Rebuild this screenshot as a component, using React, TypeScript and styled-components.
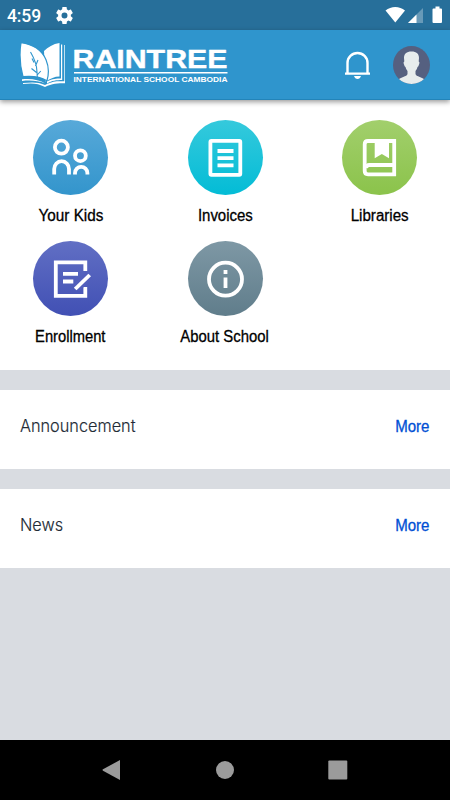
import React from 'react';
import styled, { createGlobalStyle } from 'styled-components';

const GlobalStyle = createGlobalStyle`
  * { box-sizing: border-box; }
  body { margin: 0; background: #d9dce1; font-family: "Liberation Sans", Arial, sans-serif; }
`;

const Screen = styled.div`
  width: 450px;
  height: 800px;
  display: flex;
  flex-direction: column;
  background: #d9dce1;
  overflow: hidden;
`;

const StatusBar = styled.div`
  height: 30px;
  flex: none;
  display: flex;
  align-items: center;
  justify-content: space-between;
  padding: 0 7px;
  background: #276f9a;
  color: #fff;
`;

const StatusGroup = styled.div`
  display: flex;
  align-items: center;
`;

const Clock = styled.span`
  width: 49px;
  padding-top: 1px;
  font: 500 17.5px/30px Roboto, sans-serif;
  letter-spacing: -0.1px;
`;

const Header = styled.header`
  height: 70px;
  flex: none;
  display: flex;
  align-items: center;
  justify-content: space-between;
  padding: 0 20px;
  background: #2f95cd;
  border-bottom: 1px solid #2384b9;
  box-shadow: 0 2px 5px rgba(0, 0, 0, 0.4);
  z-index: 1;
`;

const HeaderActions = styled.div`
  display: flex;
  align-items: center;
  gap: 22px;
`;

const Menu = styled.nav`
  height: 270px;
  flex: none;
  display: grid;
  grid-template-columns: repeat(3, 75px);
  grid-auto-rows: 121px;
  justify-content: space-between;
  padding: 20px 33px 0;
  background: #fff;
`;

const MenuItem = styled.div`
  display: flex;
  flex-direction: column;
  align-items: center;
`;

const Disc = styled.div<{ $from: string; $to: string }>`
  width: 75px;
  height: 75px;
  flex: none;
  border-radius: 50%;
  background: linear-gradient(${p => p.$from}, ${p => p.$to});
`;

const MenuLabel = styled.span<{ $scale: number }>`
  margin-top: 10.5px;
  font-size: 16px;
  line-height: 20px;
  white-space: nowrap;
  transform: scaleX(${p => p.$scale});
  color: #000;
  -webkit-text-stroke: 0.3px #000;
`;

const Section = styled.section<{ $height: number }>`
  height: ${p => p.$height}px;
  flex: none;
  display: flex;
  align-items: flex-start;
  justify-content: space-between;
  margin-top: 20px;
  padding: 24px 21px 0 20px;
  background: #fff;
`;

const SectionTitle = styled.h2`
  margin: 0;
  font: 300 17.5px/24px Inter, sans-serif;
  transform: scaleX(0.93);
  transform-origin: left;
  color: #222b35;
  -webkit-text-stroke: 0.15px #222b35;
`;

const More = styled.a`
  margin-top: 0.5px;
  font-size: 16px;
  line-height: 24px;
  transform: scaleX(0.94);
  transform-origin: right;
  color: #004fd4;
  -webkit-text-stroke: 0.3px #004fd4;
`;

const NavBar = styled.footer`
  height: 60px;
  flex: none;
  margin-top: auto;
  display: grid;
  grid-template-columns: repeat(3, 113px);
  justify-content: center;
  align-items: center;
  justify-items: center;
  background: #000;
`;

const Logo = () => (
  <svg width="210" height="50" viewBox="20 40 210 50">
    <path d="M44 51c4-4 9-7 15.500-8v33.500c-5 0-9 2-14 5z" fill="#fff" />
    <path d="M21 42.700c11.500 1.500 20.500 7 25 17 3 7 3 14 1 21-7-4-14-5-24-4-3-11-3.800-23-2-34z" fill="#fff" stroke="#2f95cd" strokeWidth="1.200" />
    <path d="M47 81.500c6-3 9-3 14-3V44.500h1.200V80c-6 0-10 .5-15.200 3.500zM47 84c6-3 11-3 17.300-2.700V45H65v38.200c-7 0-13 .1-20 3.800-7-4-14-4-22-3v-1c9-1 16-1 22 2zM22 79.200c9-1 17 .3 23.500 4.300-8-3-15.500-3.400-23.500-2.500z" fill="#fff" />
    <path d="M30.500 52c3.500 6 6.500 14 6.500 20q0 5 1 8M34 62.500l-2-4M35.500 66l2.500-6M36.500 72.500l-5-4M36.800 75.500l4-4.500" fill="none" stroke="#2f95cd" strokeWidth="1.100" />
    <text x="72.500" y="68" textLength="155" lengthAdjust="spacingAndGlyphs" fontFamily="Liberation Sans" fontWeight="700" fontSize="26" fill="#fff" stroke="#fff" strokeWidth=".4" strokeLinejoin="round">RAINTREE</text>
    <path d="M74 72.700h153.500" stroke="#fff" strokeWidth="1.500" />
    <text x="73.500" y="82" textLength="154" lengthAdjust="spacingAndGlyphs" fontFamily="Liberation Sans" fontWeight="700" fontSize="7.200" fill="#fff">INTERNATIONAL SCHOOL CAMBODIA</text>
  </svg>
);

const SettingsIcon = () => (
  <svg width="17" height="17" viewBox="2 2 20 20" fill="#fff">
    <path d="M19.430 12.980c.04-.32.07-.64.07-.98s-.03-.66-.07-.98l2.110-1.650c.19-.15.24-.42.12-.64l-2-3.460c-.12-.22-.39-.3-.61-.22l-2.490 1c-.52-.4-1.080-.73-1.690-.98l-.38-2.650C14.460 2.180 14.250 2 14 2h-4c-.25 0-.46.18-.49.42l-.38 2.650c-.61.25-1.170.59-1.690.98l-2.490-1c-.23-.09-.49 0-.61.22l-2 3.460c-.13.22-.07.49.12.64l2.110 1.650c-.04.32-.07.65-.07.98s.03.66.07.98l-2.110 1.650c-.19.15-.24.42-.12.64l2 3.460c.12.22.39.3.61.22l2.490-1c.52.4 1.080.73 1.690.98l.38 2.650c.03.24.24.42.49.42h4c.25 0 .46-.18.49-.42l.38-2.650c.61-.25 1.170-.59 1.690-.98l2.490 1c.23.09.49 0 .61-.22l2-3.460c.12-.22.07-.49-.12-.64zM12 15.500a3.500 3.500 0 1 1 0-7 3.500 3.500 0 0 1 0 7z" />
  </svg>
);

const SignalIcons = () => (
  <svg width="58" height="18" viewBox="385 6 58 18">
    <path d="M385.500 10.500c5.500-4.700 14-4.700 19.500 0L395.300 22.500z" fill="#fff" />
    <path d="M423 8v15h-15z" fill="#fff" opacity=".3" />
    <path d="M416.500 14.500V23H408z" fill="#fff" />
    <path d="M435.500 6.500h4V8.500h1.500q1 0 1 1v12.500q0 1-1 1h-7.500q-1 0-1-1V9.500q0-1 1-1h2z" fill="#fff" />
  </svg>
);

const BellIcon = () => (
  <svg width="27" height="30" viewBox="344 50 27 30">
    <path d="M347.500 73V63a10 10 0 0 1 20 0V73M345 73.600h25" stroke="#fff" strokeWidth="2.400" fill="none" />
    <path d="M354 76h7q-1 3-3.500 3t-3.500-3z" fill="#fff" />
  </svg>
);

const Avatar = () => (
  <svg width="37" height="38" viewBox="0 0 37 38">
    <defs><clipPath id="avatar"><ellipse cx="18.500" cy="19" rx="18.500" ry="19" /></clipPath></defs>
    <g clipPath="url(#avatar)">
      <path d="M0 0h37v38H0z" fill="#556080" />
      <path d="M18.500 5.500c5 0 7.500 2.200 7.500 6.500l-.3 3.500q1.300.7.300 3-.5 2-1.500 2.500-.5 2.500-2 4v3c0 2.500 8 3.500 10 6.500v5H4.500v-5c2-3 10-4 10-6.500v-3q-1.500-1.500-2-4-1-.5-1.500-2.500-1-2.300.3-3L11 12c0-4.300 2.500-6.500 7.500-6.500z" fill="#e7eced" />
    </g>
  </svg>
);

const Glyph = styled.svg.attrs({ width: 75, height: 75, viewBox: '0 0 75 75' })`
  display: block;
  fill: none;
  stroke: #fff;
  stroke-width: 3.8px;
`;

const PencilGap = styled.path`
  stroke: #525fbc;
  stroke-width: 9px;
`;

const items = [
  {
    label: 'Your Kids', from: '#58a9d9', to: '#3395cc', scale: 0.955,
    glyph: <><circle cx="28.400" cy="27.200" r="6.500" /><circle cx="47.400" cy="35.700" r="5.400" /><path d="M21.200 54.500V49a7.400 7.800 0 0 1 14.800 0v5.500M42 54.500v-1.500a6.200 6.200 0 0 1 12.400 0v1.500" /></>,
  },
  {
    label: 'Invoices', from: '#35c9dc', to: '#03bcd6', scale: 0.935,
    glyph: <><rect x="22.400" y="20.900" width="29.900" height="33.900" rx="1" /><path d="M29.500 31h16M29.500 38.200h16M29.500 45.300h16" /></>,
  },
  {
    label: 'Libraries', from: '#a2cf6c', to: '#8bc34b', scale: 0.945,
    glyph: <><path d="M52.200 54.300H26q-3.300 0-3.300-3.300V24.300q0-3.300 3.300-3.300h26.200z" /><path d="M52.200 45H27.300q-2.800 0-3.200 3" /><path d="M32.700 20h14.300v18.200l-7.150-4.200-7.150 4.200z" fill="#fff" stroke="none" /></>,
  },
  {
    label: 'Enrollment', from: '#616fc4', to: '#4150b4', scale: 0.92,
    glyph: <><path d="M52.300 30v-8.600H22.800v33.400h29.500V46" /><path d="M30 32.800h15M30 40.500h10.300" /><PencilGap d="m43 47.200 13.100-12.700" /><path d="m42.200 48 14.500-14" /></>,
  },
  {
    label: 'About School', from: '#7e98a5', to: '#607d8b', scale: 0.93,
    glyph: <><circle cx="37.500" cy="38.200" r="16.500" /><path d="M37.500 29v4M37.500 36.500v10.500" /></>,
  },
];

export default function App() {
  return (
    <Screen>
      <GlobalStyle />
      <StatusBar>
        <StatusGroup><Clock>4:59</Clock><SettingsIcon /></StatusGroup>
        <SignalIcons />
      </StatusBar>
      <Header>
        <Logo />
        <HeaderActions><BellIcon /><Avatar /></HeaderActions>
      </Header>
      <Menu>
        {items.map(item => (
          <MenuItem key={item.label}>
            <Disc $from={item.from} $to={item.to}><Glyph>{item.glyph}</Glyph></Disc>
            <MenuLabel $scale={item.scale}>{item.label}</MenuLabel>
          </MenuItem>
        ))}
      </Menu>
      <Section $height={79}><SectionTitle>Announcement</SectionTitle><More>More</More></Section>
      <Section $height={78.5}><SectionTitle>News</SectionTitle><More>More</More></Section>
      <NavBar>
        <svg width="20" height="22"><path d="M18 1v20L1 11.700q-1-.7 0-1.400z" fill="#9b9b9b" /></svg>
        <svg width="20" height="20"><circle cx="10" cy="10" r="9" fill="#9b9b9b" /></svg>
        <svg width="20" height="20"><rect x=".3" y=".5" width="19" height="19" rx="1" fill="#9b9b9b" /></svg>
      </NavBar>
    </Screen>
  );
}
